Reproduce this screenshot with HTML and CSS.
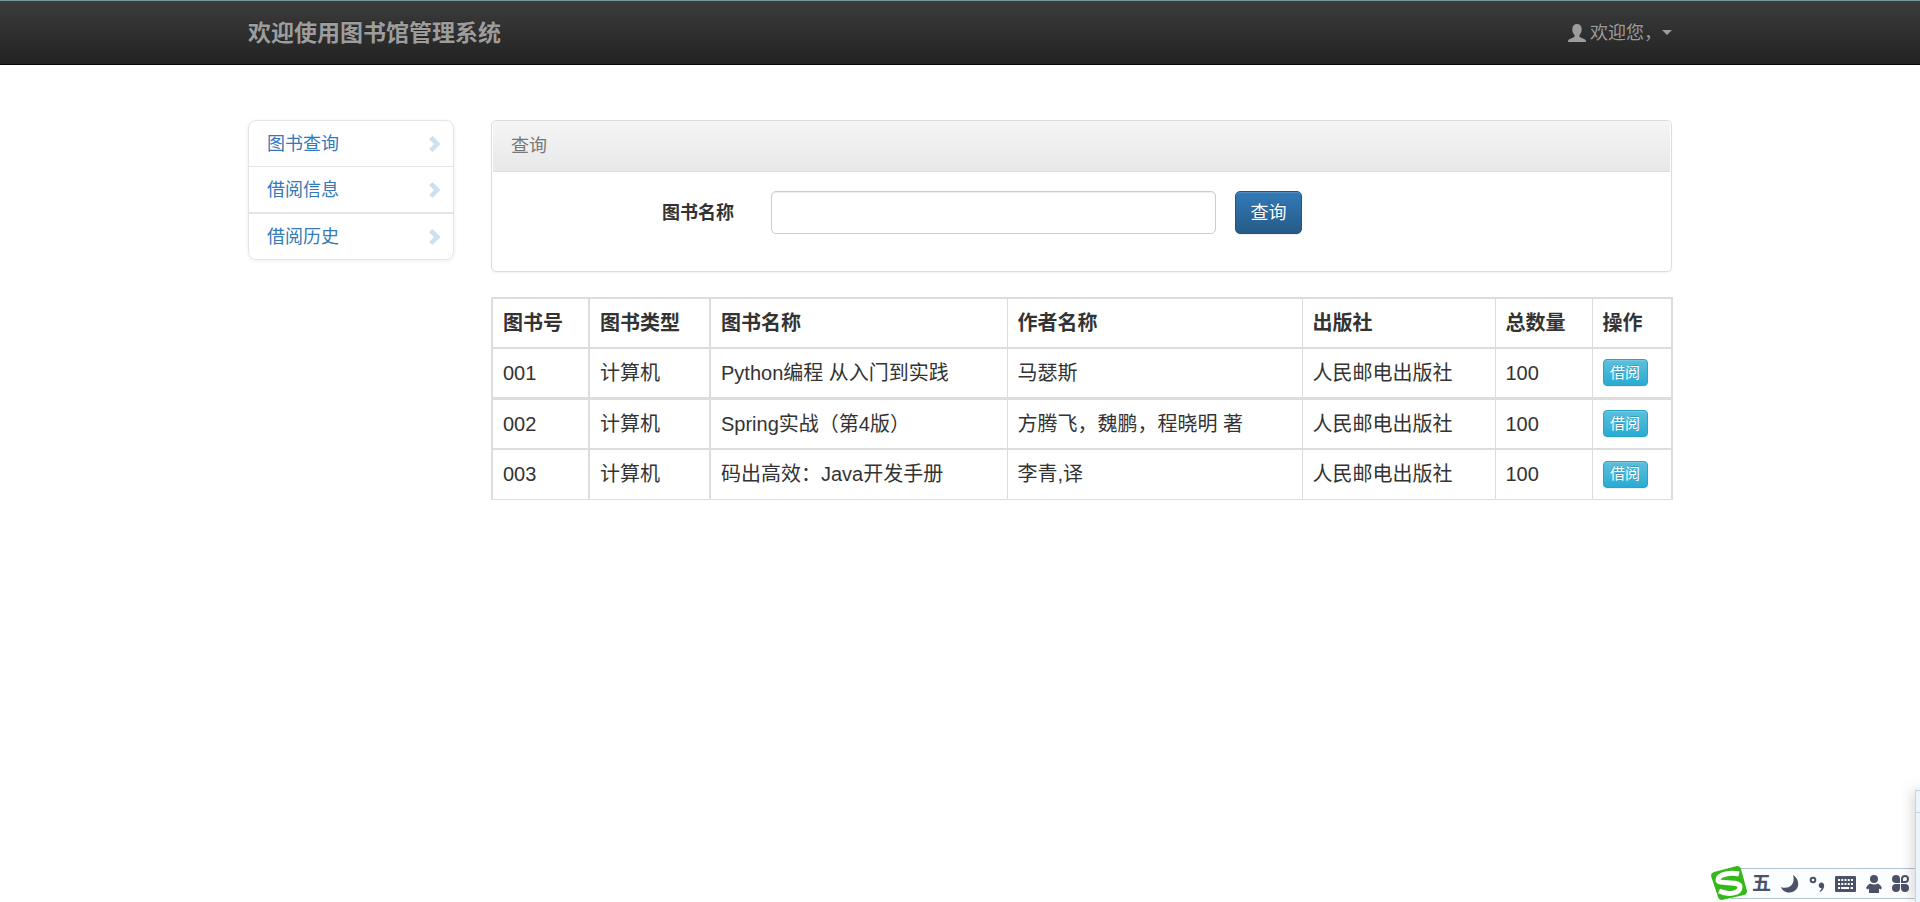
FILE: index.html
```html
<!DOCTYPE html>
<html lang="zh-CN">
<head>
    <meta charset="UTF-8">
    <meta name="viewport" content="width=device-width, initial-scale=1.0">
    <title>图书馆管理系统</title>
    <link rel="stylesheet" href="styles.css">
</head>
<body>
    <nav class="navbar">
        <div class="container navbar-inner">
            <a class="navbar-brand" href="#">欢迎使用图书馆管理系统</a>
            <a class="navbar-user" href="#">
                <svg class="icon-user" width="18" height="18" viewBox="0 0 18 18" aria-hidden="true">
                    <path d="M9 0C6 0 4.300 2 4.300 5.200C4.300 7.700 5.200 9.800 6.600 10.900V12.300C6.600 12.900 5.800 13.200 4.800 13.700L1.300 15.300C.4 15.800 0 16.400 0 18H18C18 16.400 17.600 15.800 16.700 15.300L13.200 13.700C12.200 13.200 11.400 12.900 11.400 12.300V10.900C12.800 9.800 13.700 7.700 13.700 5.200C13.700 2 12 0 9 0Z"/>
                </svg>
                <span>欢迎您，</span>
                <span class="caret"></span>
            </a>
        </div>
    </nav>

    <div class="container content">
        <!-- 左侧菜单 -->
        <ul class="side-menu">
            <li><a href="#">图书查询<svg class="chevron" width="12" height="16" viewBox="0 0 12 16" aria-hidden="true"><path d="M0 3L3.500 0L11.500 8L3.500 16L0 13L5 8Z"/></svg></a></li>
            <li><a href="#">借阅信息<svg class="chevron" width="12" height="16" viewBox="0 0 12 16" aria-hidden="true"><path d="M0 3L3.500 0L11.500 8L3.500 16L0 13L5 8Z"/></svg></a></li>
            <li><a href="#">借阅历史<svg class="chevron" width="12" height="16" viewBox="0 0 12 16" aria-hidden="true"><path d="M0 3L3.500 0L11.500 8L3.500 16L0 13L5 8Z"/></svg></a></li>
        </ul>

        <main>
            <!-- 查询 -->
            <section class="panel">
                <div class="panel-heading">查询</div>
                <form class="search-form">
                    <label for="book-name">图书名称</label>
                    <input type="text" id="book-name" name="bookName">
                    <button type="button" class="btn btn-primary">查询</button>
                </form>
            </section>

            <!-- 图书列表 -->
            <table class="book-table">
                <colgroup>
                    <col class="col-id">
                    <col class="col-type">
                    <col class="col-name">
                    <col class="col-author">
                    <col class="col-press">
                    <col class="col-count">
                    <col class="col-action">
                </colgroup>
                <thead>
                    <tr>
                        <th>图书号</th>
                        <th>图书类型</th>
                        <th>图书名称</th>
                        <th>作者名称</th>
                        <th>出版社</th>
                        <th>总数量</th>
                        <th>操作</th>
                    </tr>
                </thead>
                <tbody>
                    <tr>
                        <td>001</td>
                        <td>计算机</td>
                        <td>Python编程 从入门到实践</td>
                        <td>马瑟斯</td>
                        <td>人民邮电出版社</td>
                        <td>100</td>
                        <td><button type="button" class="btn btn-info">借阅</button></td>
                    </tr>
                    <tr>
                        <td>002</td>
                        <td>计算机</td>
                        <td>Spring实战（第4版）</td>
                        <td>方腾飞，魏鹏，程晓明 著</td>
                        <td>人民邮电出版社</td>
                        <td>100</td>
                        <td><button type="button" class="btn btn-info">借阅</button></td>
                    </tr>
                    <tr>
                        <td>003</td>
                        <td>计算机</td>
                        <td>码出高效：Java开发手册</td>
                        <td>李青,译</td>
                        <td>人民邮电出版社</td>
                        <td>100</td>
                        <td><button type="button" class="btn btn-info">借阅</button></td>
                    </tr>
                </tbody>
            </table>
        </main>
    </div>

    <!-- 输入法工具条 -->
    <div class="ime-bar">
        <svg class="ime-logo" width="36" height="36" viewBox="0 0 36 36" aria-hidden="true">
            <path fill="#35b81a" d="M3 6L26 0Q29 0 30 3L36 25Q36 28 33 29L11 34Q8 34 7 31L0 10Q0 7 3 6Z"/>
            <path fill="none" stroke="#fff" stroke-width="5" d="M28 8C21 6 7 8 7 14C7 19 29 14 29 21C29 28 17 29 8 25"/>
        </svg>
        <span class="ime-mode">五</span>
        <svg width="18" height="18" viewBox="0 0 18 18" aria-hidden="true">
            <path d="M12 0C20 5 19 17 8 17.500C4 17.500 1 15 0 12C7 15 15 10 12 0Z"/>
        </svg>
        <svg width="16" height="18" viewBox="0 0 16 18" aria-hidden="true">
            <circle class="ring" cx="4" cy="5" r="2.300"/>
            <path d="M12.500 7.500C16.500 7.500 16 15 11 17L10.500 16C12 15 12.500 14 12.500 13C8.500 13 9 7.500 12.500 7.500Z"/>
        </svg>
        <svg width="21" height="16" viewBox="0 0 21 16" aria-hidden="true">
            <rect width="21" height="16" rx="1"/>
            <path class="keys" d="M3 4H18M3 8H18" stroke-dasharray="2 1.250"/>
            <path class="keys" d="M3 12H5M6 12H14M15.500 12H18"/>
        </svg>
        <svg width="16" height="18" viewBox="0 0 16 18" aria-hidden="true">
            <circle cx="8" cy="4" r="4"/>
            <path d="M4 8.500Q8 10.500 12 8.500Q15 10 16 13L14.500 14.500L13 13.500V18H3V13.500L1.500 14.500L0 13Q1 10 4 8.500Z"/>
        </svg>
        <svg width="17" height="17" viewBox="0 0 17 17" aria-hidden="true">
            <path d="M4 0A4 4 0 0 1 8 4V8H4A4 4 0 0 1 4 0ZM4 9H8V13A4 4 0 1 1 4 9ZM9 9H13A4 4 0 1 1 9 13Z"/>
            <path class="ring" d="M10 7V4A3 3 0 1 1 13 7Z"/>
        </svg>
    </div>
    <div class="window-edge"></div>
</body>
</html>
```
FILE: styles.css
```css
* {
    box-sizing: border-box;
}

body {
    margin: 0;
    background: #fff;
    color: #333;
    font-family: "Liberation Sans", "Noto Sans CJK SC", sans-serif;
    font-size: 18px;
    line-height: 26px;
}

a {
    text-decoration: none;
}

.container {
    max-width: 1460px;
    margin: 0 auto;
    padding: 0 18px;
}

/* Navbar */
.navbar {
    border-top: 1px solid #7a9a9e;
    border-bottom: 1px solid #080808;
    background: linear-gradient(#3c3c3c, #222);
}

.navbar-inner {
    display: flex;
    justify-content: space-between;
    align-items: center;
    height: 63px;
}

.navbar-brand,
.navbar-user {
    color: #9d9d9d;
    text-shadow: 0 -1px 0 rgba(0, 0, 0, 0.25);
}

.navbar-brand {
    font-size: 23px;
    font-weight: bold;
}

.navbar-user {
    display: flex;
    align-items: center;
}

.icon-user {
    margin-right: 4px;
    fill: #9d9d9d;
}

.caret {
    border-top: 5px solid #9d9d9d;
    border-left: 5px solid transparent;
    border-right: 5px solid transparent;
}

/* Page content */
.content {
    display: grid;
    grid-template-columns: 206px minmax(0, 1fr);
    column-gap: 37px;
    align-items: start;
    margin-top: 55px;
}

/* Side menu */
.side-menu {
    margin: 0;
    padding: 0;
    list-style: none;
    border: 1px solid #e5e5e5;
    border-radius: 8px;
    box-shadow: 0 1px 4px rgba(0, 0, 0, 0.07);
}

.side-menu a {
    display: flex;
    justify-content: space-between;
    align-items: center;
    height: 45px;
    padding: 0 12px 0 18px;
    color: #337ab7;
}

.side-menu li + li {
    border-top: 1px solid #e5e5e5;
}

.side-menu li:last-child {
    border-top-width: 2px;
}

.chevron {
    fill: #cce0ef;
}

/* Search panel */
.panel {
    margin-bottom: 25px;
    padding: 0 1px;
    border: 1px solid #ddd;
    border-radius: 5px;
    box-shadow: 0 1px 2px rgba(0, 0, 0, 0.05);
}

.panel-heading {
    padding: 12px 18px;
    border-bottom: 1px solid #ddd;
    border-radius: 4px 4px 0 0;
    background: linear-gradient(#f5f5f5, #e8e8e8);
    color: #777;
}

.search-form {
    display: grid;
    grid-template-columns: 259px minmax(0, 445px) auto;
    column-gap: 19px;
    justify-content: start;
    align-items: center;
    padding: 19px 0 37px;
}

.search-form label {
    padding-right: 18px;
    font-weight: bold;
    text-align: right;
}

.search-form input {
    width: 100%;
    height: 43px;
    padding: 8px 15px;
    border: 1px solid #ccc;
    border-radius: 5px;
    box-shadow: inset 0 1px 1px rgba(0, 0, 0, 0.075);
    font: inherit;
}

/* Buttons */
.btn {
    display: block;
    border: 1px solid;
    color: #fff;
    font-family: inherit;
    cursor: pointer;
    box-shadow: inset 0 1px 0 rgba(255, 255, 255, 0.15), 0 1px 1px rgba(0, 0, 0, 0.075);
    text-shadow: 0 -1px 0 rgba(0, 0, 0, 0.2);
}

.btn-primary {
    width: 67px;
    height: 43px;
    padding: 0 0 4px;
    border-color: #245580;
    border-radius: 5px;
    background: linear-gradient(#337ab7, #265a88);
    font-size: 18px;
}

.btn-info {
    width: 45px;
    height: 27px;
    padding: 0;
    border-color: #28a4c9;
    border-radius: 4px;
    background: linear-gradient(#5bc0de, #2aabd2);
    font-size: 15px;
    line-height: 22px;
}

/* Book table */
.book-table {
    width: 100%;
    table-layout: fixed;
    border: 2px solid #ddd;
    border-bottom-width: 1px;
    border-collapse: collapse;
    font-size: 20px;
}

.book-table th,
.book-table td {
    height: 50px;
    padding: 0 10px;
    border-top: 2px solid #ddd;
    border-left: 2px solid #ddd;
    text-align: left;
}

.book-table th:nth-child(n+4),
.book-table td:nth-child(n+4) {
    border-left-width: 1px;
}

.book-table tbody tr:nth-child(2) td {
    height: 51px;
    border-top-width: 3px;
}

.col-id {
    width: 97px;
}

.col-type {
    width: 121px;
}

.col-name {
    width: 297px;
}

.col-author {
    width: 295px;
}

.col-press {
    width: 193px;
}

.col-count {
    width: 97px;
}

.col-action {
    width: 80px;
}

/* Input method bar, floats over the page */
.ime-bar {
    position: fixed;
    right: 0;
    bottom: 3px;
    display: flex;
    align-items: center;
    gap: 10px;
    height: 31px;
    padding-right: 11px;
    border-top: 1px solid #b3c3d1;
    border-bottom: 1px solid #b3c3d1;
    background: #fbfdfe;
    fill: #4b5167;
}

.ime-logo {
    margin: 0 -5px 0 -20px;
}

.ime-mode {
    color: #4b5167;
    font-size: 19px;
    font-weight: bold;
}

.ime-bar .ring {
    fill: none;
    stroke: #4b5167;
    stroke-width: 2;
}

.ime-bar .keys {
    stroke: #fff;
    stroke-width: 2;
}

/* Edge of the window on the right */
.window-edge {
    position: fixed;
    right: 0;
    bottom: 0;
    width: 5px;
    height: 112px;
    border-top: 1px solid #c5d3de;
    border-left: 1px solid #c5d3de;
    background: #ecf5fc;
    box-shadow: 0 0 14px rgba(0, 0, 0, 0.35);
}

.window-edge::before {
    content: "";
    display: block;
    height: 21px;
    border-bottom: 1px solid #c5d3de;
}
```
